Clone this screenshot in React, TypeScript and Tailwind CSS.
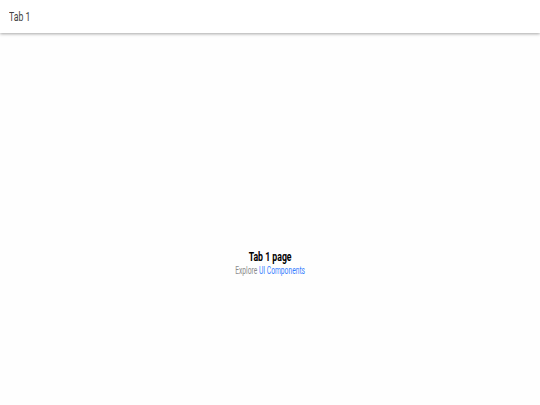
import React from "react";

export default function App() {
  return (
    <div className="w-[540px] h-[405px] bg-white flex flex-col overflow-hidden" style={{ fontFamily: "Roboto, 'Liberation Sans', sans-serif" }}>
      <header className="h-[33px] shrink-0 bg-white flex items-center pl-[9px] shadow-[0_1px_3px_rgba(0,0,0,0.35)] relative z-10">
        <span className="text-[13px] text-[#424242] origin-left scale-x-[0.67] inline-block leading-none">Tab 1</span>
      </header>
      <main className="flex-1 bg-[#fefefe] flex flex-col items-center justify-center pt-[88px]">
        <div className="flex flex-col items-center scale-x-[0.67]">
          <div className="text-[13px] font-bold text-black leading-[14px]">Tab 1 page</div>
          <div className="text-[10px] text-[#8c8c8c] leading-[13px]">
            Explore <span className="text-[#3880ff]">UI Components</span>
          </div>
        </div>
      </main>
    </div>
  );
}
